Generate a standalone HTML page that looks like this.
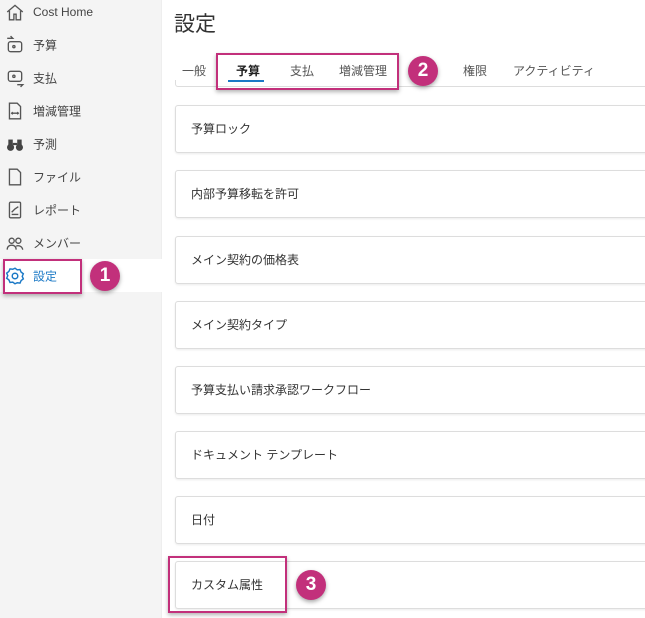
<!DOCTYPE html>
<html><head><meta charset="utf-8"><style>
body{margin:0;width:645px;height:618px;overflow:hidden;background:#fff;font-family:"Liberation Sans","Noto Sans CJK JP",sans-serif;position:relative;color:#333}
.sb{position:absolute;left:0;top:0;width:162px;height:618px;background:#f4f4f4}
.it{position:absolute;left:0;width:162px;height:33px;font-size:12px;color:#444}
.it span{position:absolute;left:33px;top:50%;transform:translateY(-50%)}
.it svg{position:absolute;left:5px;top:50%;transform:translateY(-50%)}
.sel{background:#fff;color:#1b79c6}
.pb{position:absolute;border:2px solid #c2307b;box-shadow:0 2px 4px rgba(0,0,0,.3)}
.ci{position:absolute;width:30px;height:30px;border-radius:50%;background:#c2307b;color:#fff;font-size:19px;font-weight:bold;text-align:center;line-height:30px;box-shadow:0 2px 4px rgba(0,0,0,.35)}
.card{position:absolute;left:175px;width:480px;height:46px;border:1px solid #ddd;border-radius:3px;background:#fff;box-shadow:0 1px 2px rgba(0,0,0,.08);font-size:12px;color:#333}
.card span{position:absolute;left:15px;top:14px}
.tab{position:absolute;top:62px;font-size:12px;color:#555}
</style></head><body>
<div class="sb"></div>
<div style="position:absolute;left:161px;top:0;width:1px;height:618px;background:#eee"></div>
<div class="it" style="top:-5px"><svg width="20" height="20" viewBox="0 0 18 18" fill="none" stroke="#555" stroke-width="1.2"><path d="M2 9L9 3l7 6M4 8v8h4v-5h2v5h4V8"/></svg><span>Cost Home</span></div>
<div class="it" style="top:28px"><svg width="20" height="20" viewBox="0 0 18 18" fill="none" stroke="#555" stroke-width="1.2"><rect x="3" y="6" width="12" height="9" rx="2"/><circle cx="8" cy="10.5" r="1"/><path d="M2 3h5l-2-2"/></svg><span>予算</span></div>
<div class="it" style="top:61px"><svg width="20" height="20" viewBox="0 0 18 18" fill="none" stroke="#555" stroke-width="1.2"><rect x="3" y="3" width="12" height="9" rx="2"/><circle cx="8" cy="7.5" r="1"/><path d="M11 15h5l-2 2"/></svg><span>支払</span></div>
<div class="it" style="top:94px"><svg width="20" height="20" viewBox="0 0 18 18" fill="none" stroke="#555" stroke-width="1.2"><path d="M4 2h7l3 3v11H4z"/><path d="M6 11h6M7 10l-1 1 1 1M11 10l1 1-1 1"/></svg><span>増減管理</span></div>
<div class="it" style="top:127px"><svg width="20" height="20" viewBox="0 0 18 18" fill="#444"><circle cx="5" cy="12" r="3.2"/><circle cx="13" cy="12" r="3.2"/><rect x="3" y="5" width="4" height="6"/><rect x="11" y="5" width="4" height="6"/><rect x="7" y="8" width="4" height="2"/></svg><span>予測</span></div>
<div class="it" style="top:160px"><svg width="20" height="20" viewBox="0 0 18 18" fill="none" stroke="#555" stroke-width="1.2"><path d="M4 2h7l3 3v11H4z"/></svg><span>ファイル</span></div>
<div class="it" style="top:193px"><svg width="20" height="20" viewBox="0 0 18 18" fill="none" stroke="#555" stroke-width="1.2"><rect x="4" y="2" width="10" height="14" rx="1"/><path d="M6 13h6M6 11l3-3 3-2"/></svg><span>レポート</span></div>
<div class="it" style="top:226px"><svg width="20" height="20" viewBox="0 0 18 18" fill="none" stroke="#555" stroke-width="1.2"><circle cx="6" cy="7" r="2.3"/><circle cx="12" cy="7" r="2.3"/><path d="M2 15c0-3 2-4 4-4s4 1 4 4M10 12c1-1 5-1 6 3"/></svg><span>メンバー</span></div>
<div class="it sel" style="top:259px"><svg width="20" height="20" viewBox="0 0 18 18" fill="none" stroke="#1b79c6" stroke-width="1.3"><path d="M9 2l2 1.5 2.5-.3 1 2.3 2 1.5-1 2.3 1 2.3-2 1.5-1 2.3-2.5-.3L9 16l-2-1.5-2.5.3-1-2.3-2-1.5 1-2.3-1-2.3 2-1.5 1-2.3 2.5.3z"/><circle cx="9" cy="9" r="2.5"/></svg><span>設定</span></div>
<div class="pb" style="left:3px;top:259px;width:75px;height:31px"></div>
<div class="ci" style="left:90px;top:261px">1</div>

<div style="position:absolute;left:174px;top:8px;font-size:21px;color:#333">設定</div>
<div class="tab" style="left:182px">一般</div>
<div class="tab" style="left:236px;font-weight:bold;color:#222">予算</div>
<div style="position:absolute;left:228px;top:80px;width:36px;height:2px;background:#1b79c6"></div>
<div class="tab" style="left:290px">支払</div>
<div class="tab" style="left:339px">増減管理</div>
<div class="tab" style="left:463px">権限</div>
<div class="tab" style="left:513px">アクティビティ</div>
<div style="position:absolute;left:175px;top:80px;width:480px;height:6px;border:1px solid #ddd;border-top:none;border-radius:0 0 3px 3px"></div>
<div class="pb" style="left:216px;top:53px;width:179px;height:33px"></div>
<div class="ci" style="left:408px;top:56px">2</div>

<div class="card" style="top:105px"><span>予算ロック</span></div>
<div class="card" style="top:170px"><span>内部予算移転を許可</span></div>
<div class="card" style="top:236px"><span>メイン契約の価格表</span></div>
<div class="card" style="top:301px"><span>メイン契約タイプ</span></div>
<div class="card" style="top:366px"><span>予算支払い請求承認ワークフロー</span></div>
<div class="card" style="top:431px"><span>ドキュメント テンプレート</span></div>
<div class="card" style="top:496px"><span>日付</span></div>
<div class="card" style="top:561px"><span>カスタム属性</span></div>
<div class="pb" style="left:168px;top:556px;width:115px;height:53px"></div>
<div class="ci" style="left:296px;top:570px">3</div>
</body></html>
